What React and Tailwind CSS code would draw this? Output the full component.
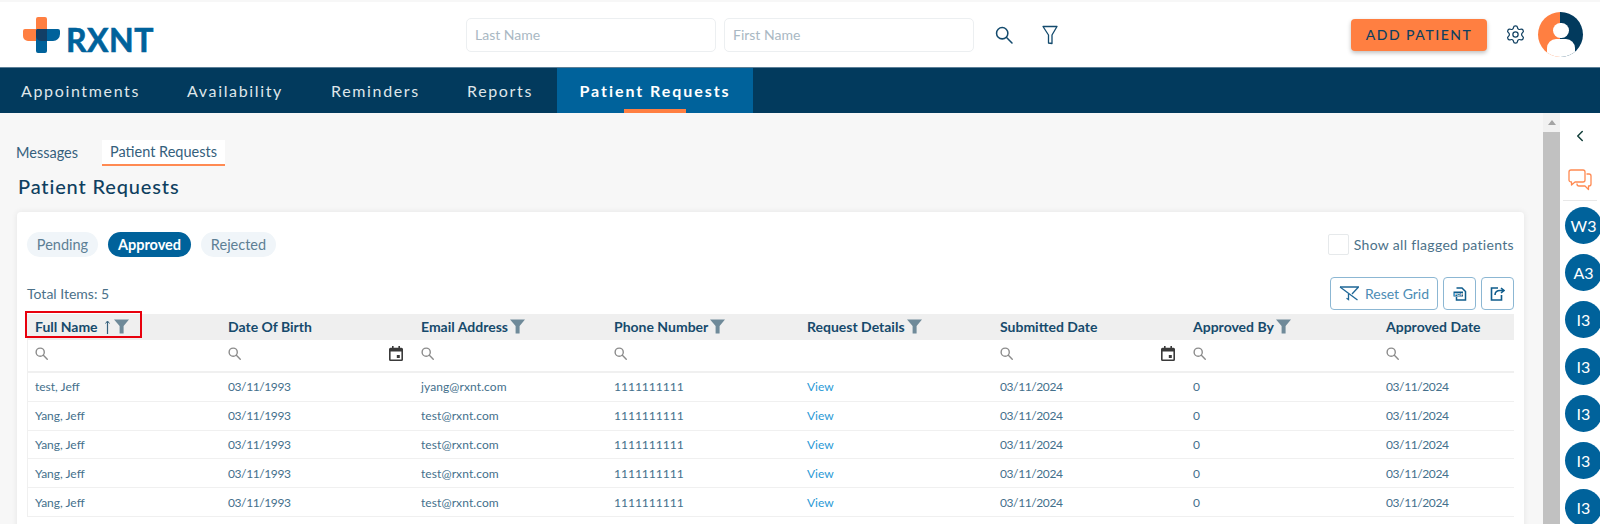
import React from 'react';
import { Settings, ChevronLeft } from 'lucide-react';

const navItems = [
  { label: 'Appointments', cls: 'w-[167px] pl-[21px]' },
  { label: 'Availability', cls: 'w-[144px] pl-[20px]' },
  { label: 'Reminders', cls: 'w-[136px] pl-[20px]' },
  { label: 'Reports', cls: 'w-[110px] pl-[20px]' },
];

const columns = [
  { label: 'Full Name', sort: true, filter: true, search: true },
  { label: 'Date Of Birth', search: true, calendar: true },
  { label: 'Email Address', filter: true, search: true },
  { label: 'Phone Number', filter: true, search: true },
  { label: 'Request Details', filter: true },
  { label: 'Submitted Date', search: true, calendar: true },
  { label: 'Approved By', filter: true, search: true },
  { label: 'Approved Date', search: true },
];

const rows = [
  ['test, Jeff', 'jyang@rxnt.com'],
  ['Yang, Jeff', 'test@rxnt.com'],
  ['Yang, Jeff', 'test@rxnt.com'],
  ['Yang, Jeff', 'test@rxnt.com'],
  ['Yang, Jeff', 'test@rxnt.com'],
];

const sideUsers = ['W3', 'A3', 'I3', 'I3', 'I3', 'I3', 'I3'];

const Logo = () => (
  <svg width="37" height="36" viewBox="0 0 37 36" className="shrink-0">
    <path d="M15 0h7a2 2 0 0 1 2 2v22H5a5 5 0 0 1-5-5v-5a2 2 0 0 1 2-2h11V2a2 2 0 0 1 2-2z" fill="#ff7f41" />
    <path d="M15 12h20a2 2 0 0 1 2 2v3a7 7 0 0 1-7 7h-6v10a2 2 0 0 1-2 2h-7a2 2 0 0 1-2-2V14a2 2 0 0 1 2-2z" fill="#00629b" />
    <path d="M15 12h9v12H18a5 5 0 0 1-5-5v-5a2 2 0 0 1 2-2z" fill="#123f66" />
  </svg>
);

const Funnel = () => (
  <svg width="15" height="15" viewBox="0 0 15 15" className="shrink-0">
    <path d="M0 0.5h15L9.6 7v7.5H5.6V7z" fill="#6f8a99" />
  </svg>
);

const SortArrow = () => (
  <svg width="7" height="14" viewBox="0 0 7 14" className="ml-[4px] mr-[1px] shrink-0" fill="none" stroke="#35607c">
    <path d="M3.500 1.500V14" strokeWidth="1.200" />
    <path d="M1.500 3.500L3.500 1L5.500 3.500" strokeWidth="1" />
  </svg>
);

const SearchGlyph = ({ size = 14, color = '#8b8b8b', width = 1.5 }) => (
  <svg width={size} height={size} viewBox="0 0 14 14" fill="none" stroke={color} strokeWidth={width} className="shrink-0">
    <circle cx="5.6" cy="5.6" r="4.4" />
    <path d="M9 9l4.2 4.2" strokeLinecap="round" />
  </svg>
);

const CalendarGlyph = () => (
  <svg width="14" height="15" viewBox="0 0 14 15" className="shrink-0">
    <path d="M1.500 1.800H3V0h1.600v1.800h4.800V0H11v1.800h1.500A1.500 1.500 0 0 1 14 3.300v10.200a1.500 1.500 0 0 1-1.500 1.500h-11A1.500 1.500 0 0 1 0 13.500V3.300a1.500 1.500 0 0 1 1.500-1.500zM1.600 5.600v7.800h10.800V5.600z" fill="#3a3a3a" fillRule="evenodd" />
    <rect x="7.800" y="9" width="3" height="3" fill="#3a3a3a" />
  </svg>
);

const ChatGlyph = () => (
  <svg width="24" height="22" viewBox="0 0 24 22" fill="none" stroke="#ff8a52" strokeWidth="1.300" strokeLinejoin="round">
    <path d="M3 1h12a2 2 0 0 1 2 2v8a2 2 0 0 1-2 2H7l-3.500 3v-3H3a2 2 0 0 1-2-2V3a2 2 0 0 1 2-2z" />
    <path d="M18.500 5H21a2 2 0 0 1 2 2v8a2 2 0 0 1-2 2h-.5v3.500L17 17h-6a2 2 0 0 1-2-2v-.5" />
  </svg>
);

const App = () => {
  return (
    <div className="h-[524px] w-[1600px] overflow-hidden flex flex-col bg-[#f7f7f7] font-['Lato','Noto_Sans',sans-serif] text-[#0f3f60]">
      {/* top bar */}
      <header className="mt-[2px] h-[65px] shrink-0 bg-white flex items-center">
        <div className="w-[466px] pl-[23px] flex items-end gap-[6px] self-start pt-[15px]">
          <Logo />
          <span className="text-[32px] leading-[36px] -mb-[5px] font-bold tracking-[0.500px] text-[#00629b] [-webkit-text-stroke:0.6px_#00629b]">RXNT</span>
        </div>
        <div className="flex gap-[8px]">
          <div className="w-[250px] h-[34px] bg-white border border-[#eceff1] rounded-[5px] pl-[8px] pb-[1px] flex items-center text-[14px] text-[#a9b8c3]">Last Name</div>
          <div className="w-[250px] h-[34px] bg-white border border-[#eceff1] rounded-[5px] pl-[8px] pb-[1px] flex items-center text-[14px] text-[#a9b8c3]">First Name</div>
        </div>
        <div className="ml-[21px] mr-[29px]">
          <SearchGlyph size={18} color="#134a6d" width={1.200} />
        </div>
        <svg width="16" height="20" viewBox="0 0 16 20" fill="none" stroke="#134a6d" strokeWidth="1.300" strokeLinejoin="round">
          <path d="M1 1.500h14L10 10v8.500L6.500 18V10z" />
        </svg>
        <div className="flex-1" />
        <button className="w-[136px] h-[32px] rounded-[4px] bg-[#ff7f41] text-[#0f3f60] text-[14px] font-medium tracking-[1.500px] shadow-[0_2px_4px_rgba(0,0,0,0.25)]">
          ADD PATIENT
        </button>
        <Settings size={21} strokeWidth={1.400} className="ml-[18px] mr-[12px] text-[#0f3f60]" />
        <div className="mr-[17px] w-[45px] h-[45px] rounded-full overflow-hidden bg-[linear-gradient(90deg,#ff7f41_50%,#023a5d_50%)] flex flex-col items-center shrink-0">
          <div className="mt-[11px] w-[16px] h-[16px] rounded-full bg-white" />
          <div className="mt-[1px] w-[28px] h-[20px] rounded-t-[9px] bg-white" />
        </div>
      </header>

      {/* nav */}
      <nav className="h-[46px] shrink-0 bg-[#023a5d] flex border-t border-[#5c7f97] border-b-[#9fb3c2]">
        {navItems.map((item) => (
          <div key={item.label} className={`${item.cls} flex items-center text-[16px] tracking-[1.650px] text-[#dfe6ea]`}>
            {item.label}
          </div>
        ))}
        <div className="w-[196px] bg-[#00629b] flex items-center justify-center text-[16px] font-bold tracking-[1.950px] text-white relative">
          Patient Requests
          <span className="absolute bottom-0 left-[67px] w-[62px] h-[4px] bg-[#ff7f41]" />
        </div>
      </nav>

      <div className="flex-1 flex min-h-0">
        {/* main */}
        <main className="w-[1543px] shrink-0 pt-[27px] pl-[16px] pr-[19px] overflow-hidden">
          <div className="flex h-[26px] text-[14.500px]">
            <div className="w-[86px] flex items-center text-[#35607c]">Messages</div>
            <div className="w-[123px] flex items-center justify-center bg-white border-b-2 border-[#ff8a52] text-[#35607c]">Patient Requests</div>
          </div>
          <h1 className="mt-[6px] ml-[2px] text-[20px] leading-[28px] font-medium tracking-[0.850px] text-[#0f3f60]">Patient Requests</h1>

          <section className="mt-[12px] ml-[1px] w-[1507px] h-[400px] bg-white rounded-t-[4px] shadow-[0_0_6px_rgba(0,0,0,0.08)] pt-[20px] px-[10px]">
            <div className="flex items-center justify-between h-[25px]">
              <div className="flex gap-[10px] text-[14.500px]">
                <div className="w-[71px] h-[25px] rounded-full bg-[#f0f5f9] flex items-center justify-center text-[#5d7f95]">Pending</div>
                <div className="w-[83px] h-[25px] rounded-full bg-[#00629b] flex items-center justify-center text-white font-bold">Approved</div>
                <div className="w-[75px] h-[25px] rounded-full bg-[#f0f5f9] flex items-center justify-center text-[#5d7f95]">Rejected</div>
              </div>
              <div className="flex items-center gap-[5px] text-[14px] text-[#4b7189] tracking-[0.320px]">
                <span className="w-[21px] h-[21px] border border-[#e6e9eb] rounded-[2px]" />
                Show all flagged patients
              </div>
            </div>

            <div className="mt-[20px] flex items-center justify-between h-[33px]">
              <span className="text-[14px] text-[#4b7189]">Total Items: 5</span>
              <div className="flex gap-[5px] text-[#4c8db5]">
                <button className="w-[108px] h-[33px] border border-[#8cb7d3] rounded-[4px] flex items-center justify-center gap-[6px] text-[14px]">
                  <svg width="20" height="15" viewBox="0 0 20 15" fill="none" stroke="#1f6797" strokeWidth="1.300">
                    <path d="M1 1H19.500L13 8" />
                    <path d="M1 1L18.500 14" />
                    <path d="M9.500 8v5.500l-2-1.200" />
                  </svg>
                  Reset Grid
                </button>
                <button className="w-[33px] h-[33px] border border-[#8cb7d3] rounded-[4px] flex items-center justify-center">
                  <svg width="14" height="14" viewBox="0 0 14 14" fill="none">
                    <path d="M3.500 1H9l3.500 3.500V13H3.500V10" stroke="#0f5c8c" strokeWidth="1.500" />
                    <rect x="0.500" y="4.500" width="9.500" height="5" fill="#0f5c8c" />
                    <text x="1.200" y="8.600" fontSize="4.500" fontWeight="700" fill="#ffffff">PDF</text>
                  </svg>
                </button>
                <button className="w-[33px] h-[33px] border border-[#8cb7d3] rounded-[4px] flex items-center justify-center">
                  <svg width="15" height="15" viewBox="0 0 15 15" fill="none" stroke="#0f5c8c" strokeWidth="1.600">
                    <path d="M8 2H1.500v12h10V9" />
                    <path d="M5 9c0-3 2-4.500 5-4.500h3.500M11 2l3 2.500L11 7" />
                  </svg>
                </button>
              </div>
            </div>

            {/* grid */}
            <div className="mt-[4px] w-[1487px] relative">
              <div className="overflow-hidden border-l border-[#f0f0f0]">
                <div className="w-[1544px] grid grid-cols-[repeat(8,193px)] h-[26px] bg-[#efefef]">
                  {columns.map((col) => (
                    <div key={col.label} className="pl-[7px] pb-[1px] flex items-center gap-[2px] text-[14px] font-bold text-[#164a6c]">
                      {col.label}
                      {col.sort && <SortArrow />}
                      {col.filter && <Funnel />}
                    </div>
                  ))}
                </div>
                <div className="w-[1544px] grid grid-cols-[repeat(8,193px)] h-[33px] border-b-2 border-[#f0f0f0]">
                  {columns.map((col) => (
                    <div key={col.label} className="pl-[7px] pr-[11px] flex items-center justify-between pb-[4px]">
                      {col.search ? <SearchGlyph size={13} /> : <span />}
                      {col.calendar && <CalendarGlyph />}
                    </div>
                  ))}
                </div>
                {rows.map((row, i) => (
                  <div key={i} className="w-[1544px] grid grid-cols-[repeat(8,193px)] h-[28.800px] pt-[1px] border-b border-[#f0f0f0] text-[12px] text-[#44708c]">
                    <div className="pl-[7px] flex items-center">{row[0]}</div>
                    <div className="pl-[7px] flex items-center tracking-[-0.400px]">03/11/1993</div>
                    <div className="pl-[7px] flex items-center tracking-[0.100px]">{row[1]}</div>
                    <div className="pl-[7px] flex items-center">1111111111</div>
                    <div className="pl-[7px] flex items-center text-[#2a9ad6]">View</div>
                    <div className="pl-[7px] flex items-center tracking-[-0.400px]">03/11/2024</div>
                    <div className="pl-[7px] flex items-center">0</div>
                    <div className="pl-[7px] flex items-center tracking-[-0.400px]">03/11/2024</div>
                  </div>
                ))}
              </div>
              {/* annotation box from the screenshot */}
              <div className="absolute left-[-2px] top-[-3px] w-[117px] h-[27px] border-2 border-[#e8000d]" />
            </div>
          </section>
        </main>

        {/* scrollbar */}
        <div className="w-[17px] shrink-0 bg-[#f1f1f1] flex flex-col items-center">
          <div className="h-[19px] pt-[7px]">
            <div className="w-0 h-0 border-x-[4px] border-x-transparent border-b-[5px] border-b-[#a3a3a3]" />
          </div>
          <div className="flex-1 w-full bg-[#c1c1c1]" />
        </div>

        {/* side panel */}
        <aside className="flex-1 min-w-0 bg-white overflow-hidden">
          <div className="h-[88px] mx-[3px] border-b border-[#e8e8e8] flex flex-col items-center pt-[14px]">
            <ChevronLeft size={18} strokeWidth={2} className="text-[#123f3a]" />
            <div className="mt-[24px]"><ChatGlyph /></div>
          </div>
          <div className="pl-[5px] pt-[6px] flex flex-col gap-[10px]">
            {sideUsers.map((u, i) => (
              <div key={i} className="w-[37px] h-[37px] shrink-0 rounded-full bg-[#00629b] text-white text-[16px] flex items-center justify-center">
                {u}
              </div>
            ))}
          </div>
        </aside>
      </div>
    </div>
  );
};

export default App;
